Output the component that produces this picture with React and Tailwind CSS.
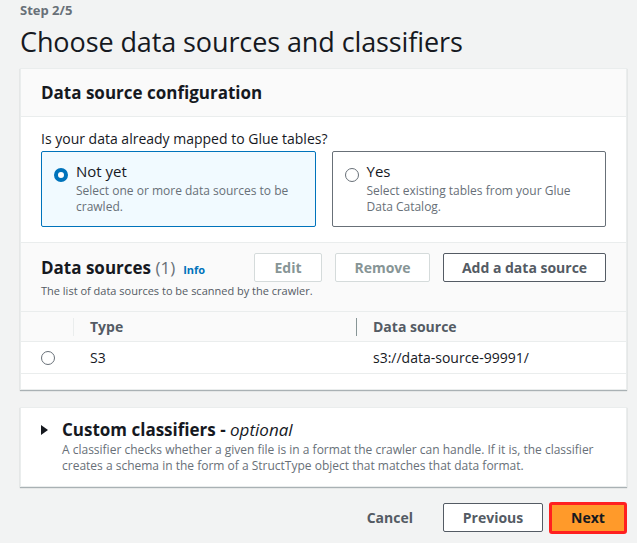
import React, { useState } from "react";

function Radio({ checked }) {
  return checked ? (
    <span className="inline-block w-[14px] h-[14px] rounded-full border-[4px] border-[#0073bb] bg-white shrink-0" />
  ) : (
    <span className="inline-block w-[14px] h-[14px] rounded-full border border-[#687078] bg-white shrink-0" />
  );
}

function Tile({ checked, title, desc, onClick }) {
  return (
    <div
      onClick={onClick}
      className={
        checked
          ? "flex-1 h-[76px] border border-[#0073bb] bg-[#f1faff] rounded-[2px] pl-[12px] pr-4 pt-[9px] cursor-pointer"
          : "flex-1 h-[76px] border border-[#687078] bg-white rounded-[2px] pl-[12px] pr-4 pt-[9px] cursor-pointer"
      }
    >
      <div className="flex items-start gap-[8px]">
        <div className="pt-[3px]">
          <Radio checked={checked} />
        </div>
        <div>
          <div className="text-[15px] leading-[20px] text-[#16191f]">{title}</div>
          <div className="text-[12px] leading-[16px] text-[#687078] mt-[2px]">{desc}</div>
        </div>
      </div>
    </div>
  );
}

export default function App() {
  const [mapped, setMapped] = useState("no");

  return (
    <div className="min-h-screen bg-[#f2f3f3] pl-5 pr-[10px] font-['Open_Sans',sans-serif] text-[#16191f]">
      <div className="pt-[2px] text-[13px] leading-[16px] font-bold text-[#687078]">Step 2/5</div>
      <h1 className="text-[27px] leading-[36px] mt-[6px] text-[#16191f] tracking-[-0.1px]">
        Choose data sources and classifiers
      </h1>

      <div className="mt-[8px] bg-white border border-[#eaeded] shadow-[0_1px_1px_0_rgba(0,28,36,0.3)]">
        <div className="h-[48px] bg-[#fafafa] border-b border-[#eaeded] px-5 flex items-center">
          <h2 className="text-[17px] font-bold">Data source configuration</h2>
        </div>

        <div className="px-5 pt-[13px] pb-[15px]">
          <div className="text-[14px] leading-[18px] mb-[3px]">Is your data already mapped to Glue tables?</div>
          <div className="flex gap-4">
            <Tile
              checked={mapped === "no"}
              onClick={() => setMapped("no")}
              title="Not yet"
              desc="Select one or more data sources to be crawled."
            />
            <Tile
              checked={mapped === "yes"}
              onClick={() => setMapped("yes")}
              title="Yes"
              desc="Select existing tables from your Glue Data Catalog."
            />
          </div>
        </div>

        <div className="border-t border-[#eaeded] bg-[#fafafa]">
          <div className="px-5 pt-[10px] pb-[13px]">
            <div className="flex items-center justify-between">
              <div className="flex items-baseline gap-[8px]">
                <h2 className="text-[17px] font-bold">
                  Data sources <span className="font-normal text-[#687078]">(1)</span>
                </h2>
                <a className="text-[11px] font-bold text-[#0073bb] cursor-pointer">Info</a>
              </div>
              <div className="flex gap-[13px]">
                <button className="h-[29px] w-[68px] border border-[#d5dbdb] bg-white text-[14px] font-bold text-[#879596] rounded-[2px]">
                  Edit
                </button>
                <button className="h-[29px] w-[95px] border border-[#d5dbdb] bg-white text-[14px] font-bold text-[#879596] rounded-[2px]">
                  Remove
                </button>
                <button className="h-[29px] w-[163px] border border-[#545b64] bg-white text-[14px] font-bold text-[#545b64] rounded-[2px]">
                  Add a data source
                </button>
              </div>
            </div>
            <p className="text-[11px] leading-[14px] text-[#545b64] mt-[2px]">
              The list of data sources to be scanned by the crawler.
            </p>
          </div>

          <div className="border-t border-[#eaeded] h-[30px] grid grid-cols-[53px_283px_1fr] items-center text-[14px] font-bold text-[#545b64]">
            <div className="h-[18px] border-r border-[#eaeded]" />
            <div className="h-[18px] border-r border-[#879596] flex items-center pl-4">Type</div>
            <div className="pl-4">Data source</div>
          </div>
        </div>

        <div className="border-t border-[#eaeded] h-[32px] grid grid-cols-[53px_283px_1fr] items-center text-[14px]">
          <div className="pl-5 flex items-center">
            <Radio checked={false} />
          </div>
          <div className="pl-4">S3</div>
          <div className="pl-4">s3://data-source-99991/</div>
        </div>
        <div className="border-t border-[#eaeded] h-[16px]" />
      </div>

      <div className="mt-[17px] bg-white border border-[#eaeded] shadow-[0_1px_1px_0_rgba(0,28,36,0.3)] px-5 pt-[9px] pb-[12px]">
        <div className="flex items-center gap-[14px]">
          <svg width="7" height="10" viewBox="0 0 7 10" className="shrink-0">
            <path d="M0 0 L7 5 L0 10 Z" fill="#16191f" />
          </svg>
          <h2 className="text-[17px] font-bold">
            Custom classifiers - <span className="font-normal italic">optional</span>
          </h2>
        </div>
        <p className="pl-[21px] text-[12px] leading-[16px] text-[#687078] -mt-[1px]">
          A classifier checks whether a given file is in a format the crawler can handle. If it is, the classifier creates a schema in the form of a StructType object that matches that data format.
        </p>
      </div>

      <div className="flex items-center justify-end mt-[15px] pb-[10px]">
        <button className="text-[14px] font-bold text-[#545b64] px-5 mr-[10px]">Cancel</button>
        <button className="h-[29px] w-[100px] border border-[#545b64] bg-white text-[14px] font-bold text-[#545b64] rounded-[2px] mr-[6px]">
          Previous
        </button>
        <button className="h-[32px] w-[78px] border-[3px] border-[#ff2020] rounded-[3px] bg-[#ff9a2a] text-[14px] font-bold text-[#16191f]">
          Next
        </button>
      </div>
    </div>
  );
}
